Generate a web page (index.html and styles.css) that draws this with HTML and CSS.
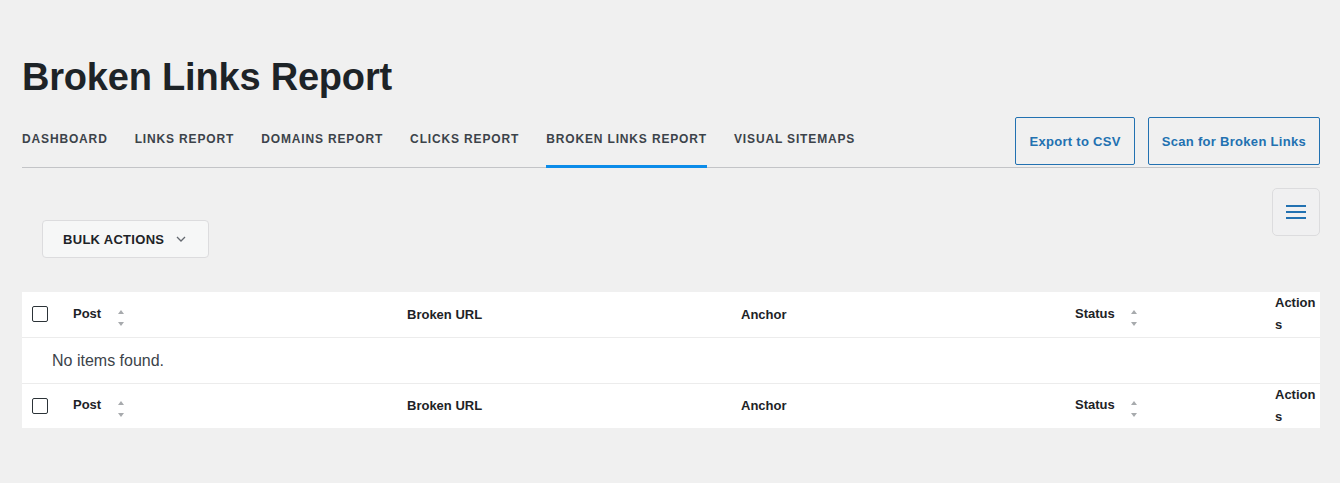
FILE: index.html
```html
<!DOCTYPE html>
<html lang="en">
<head>
    <meta charset="UTF-8">
    <meta name="viewport" content="width=device-width, initial-scale=1.0">
    <title>Broken Links Report</title>
    <link rel="stylesheet" href="styles.css">
</head>
<body>
    <div class="wrap">
        <h1 class="page-title">Broken Links Report</h1>

        <!-- sub navigation + actions -->
        <div class="subnav">
            <nav class="tabs">
                <a href="#">Dashboard</a>
                <a href="#">Links Report</a>
                <a href="#">Domains Report</a>
                <a href="#">Clicks Report</a>
                <a href="#" class="active">Broken Links Report</a>
                <a href="#">Visual Sitemaps</a>
            </nav>
            <div class="page-actions">
                <button class="btn-outline">Export to CSV</button>
                <button class="btn-outline">Scan for Broken Links</button>
            </div>
        </div>

        <!-- table nav -->
        <div class="tablenav">
            <button class="bulk-actions">Bulk Actions
                <svg width="10" height="6" viewBox="0 0 10 6"><polyline points="1,1 5,5 9,1" fill="none" stroke="#646970" stroke-width="1.3"/></svg>
            </button>
            <button class="menu-btn" aria-label="Columns">
                <svg width="20" height="14" viewBox="0 0 20 14">
                    <rect x="0" y="0" width="20" height="2" fill="#2271b1"/>
                    <rect x="0" y="6" width="20" height="2" fill="#2271b1"/>
                    <rect x="0" y="12" width="20" height="2" fill="#2271b1"/>
                </svg>
            </button>
        </div>

        <table class="list-table">
            <colgroup>
                <col class="c-cb">
                <col class="c-post">
                <col class="c-url">
                <col class="c-anchor">
                <col class="c-status">
                <col class="c-actions">
            </colgroup>
            <thead>
                <tr>
                    <th class="cb"><span class="checkbox"></span></th>
                    <th>Post <span class="sort"><svg width="8" height="16" viewBox="0 0 8 16"><polygon points="1,4 4,0 7,4" fill="#a7aaad"/><polygon points="1,12 4,16 7,12" fill="#a7aaad"/></svg></span></th>
                    <th>Broken URL</th>
                    <th>Anchor</th>
                    <th>Status <span class="sort"><svg width="8" height="16" viewBox="0 0 8 16"><polygon points="1,4 4,0 7,4" fill="#a7aaad"/><polygon points="1,12 4,16 7,12" fill="#a7aaad"/></svg></span></th>
                    <th class="actions">Actions</th>
                </tr>
            </thead>
            <tbody>
                <tr class="no-items">
                    <td colspan="6">No items found.</td>
                </tr>
            </tbody>
            <tfoot>
                <tr>
                    <th class="cb"><span class="checkbox"></span></th>
                    <th>Post <span class="sort"><svg width="8" height="16" viewBox="0 0 8 16"><polygon points="1,4 4,0 7,4" fill="#a7aaad"/><polygon points="1,12 4,16 7,12" fill="#a7aaad"/></svg></span></th>
                    <th>Broken URL</th>
                    <th>Anchor</th>
                    <th>Status <span class="sort"><svg width="8" height="16" viewBox="0 0 8 16"><polygon points="1,4 4,0 7,4" fill="#a7aaad"/><polygon points="1,12 4,16 7,12" fill="#a7aaad"/></svg></span></th>
                    <th class="actions">Actions</th>
                </tr>
            </tfoot>
        </table>
    </div>
</body>
</html>
```

FILE: styles.css
```css
body {
    font-family: "Liberation Sans", Arial, sans-serif;
    background-color: #f0f0f0;
    color: #1d2327;
    margin: 0;
    padding: 0;
}

.wrap {
    padding: 0 20px 0 22px;
}

.page-title {
    font-size: 38px;
    line-height: 46px;
    font-weight: bold;
    letter-spacing: -0.2px;
    color: #1d2327;
    margin: 54px 0 17px;
}

.subnav {
    display: flex;
    justify-content: space-between;
    align-items: flex-end;
    border-bottom: 1px solid #c3c4c7;
}

.tabs {
    display: flex;
    gap: 27px;
}

.tabs a {
    display: block;
    font-size: 12px;
    line-height: 16px;
    font-weight: bold;
    letter-spacing: 0.85px;
    text-transform: uppercase;
    color: #3c434a;
    text-decoration: none;
    padding-bottom: 18px;
    border-bottom: 3px solid transparent;
    margin-bottom: -1px;
}

.tabs a.active {
    border-bottom-color: #0c8ce9;
}

.page-actions {
    display: flex;
    gap: 13px;
    margin-bottom: 2px;
}

.btn-outline {
    font-family: inherit;
    height: 48px;
    padding: 0 13px;
    background: transparent;
    border: 1px solid #2271b1;
    border-radius: 2px;
    color: #2271b1;
    font-size: 13px;
    font-weight: bold;
    letter-spacing: 0.3px;
    cursor: pointer;
}

.tablenav {
    display: flex;
    justify-content: space-between;
    align-items: flex-start;
    margin-top: 20px;
    height: 104px;
}

.bulk-actions {
    font-family: inherit;
    margin: 32px 0 0 20px;
    height: 38px;
    width: 167px;
    padding: 0 0 0 20px;
    display: flex;
    align-items: center;
    gap: 12px;
    background: #f6f7f7;
    border: 1px solid #dcdcde;
    border-radius: 4px;
    color: #1d2327;
    font-size: 13px;
    font-weight: bold;
    letter-spacing: 0.3px;
    text-transform: uppercase;
}

.menu-btn {
    width: 48px;
    height: 48px;
    display: flex;
    align-items: center;
    justify-content: center;
    background: #f0f0f1;
    border: 1px solid #dcdcde;
    border-radius: 5px;
    padding: 0;
}

.list-table {
    width: 100%;
    table-layout: fixed;
    border-collapse: collapse;
    background: #fff;
}

.c-cb { width: 41px; }
.c-post { width: 334px; }
.c-url { width: 334px; }
.c-anchor { width: 334px; }
.c-status { width: 201px; }
.c-actions { width: 54px; }

.list-table th {
    text-align: left;
    font-size: 13px;
    font-weight: bold;
    color: #1d2327;
    padding: 0 10px;
    vertical-align: middle;
}

.list-table thead tr {
    height: 45px;
    border-bottom: 1px solid #ececec;
}

.list-table tfoot tr {
    height: 44px;
}

.list-table th.cb {
    padding: 0 0 0 10px;
}

.list-table th.actions {
    padding: 0 0 0 9px;
    line-height: 22px;
    word-break: break-all;
}

.checkbox {
    display: block;
    width: 16px;
    height: 16px;
    box-sizing: border-box;
    border: 1.5px solid #2c3338;
    border-radius: 2px;
    background: #fff;
}

.sort {
    display: inline-block;
    vertical-align: middle;
    margin-left: 12px;
    position: relative;
    top: 3px;
}

.sort svg {
    display: block;
}

.no-items {
    height: 46px;
    border-bottom: 1px solid #ececec;
}

.no-items td {
    padding: 2px 0 0 30px;
    font-size: 16px;
    color: #3c434a;
    vertical-align: middle;
}
```
